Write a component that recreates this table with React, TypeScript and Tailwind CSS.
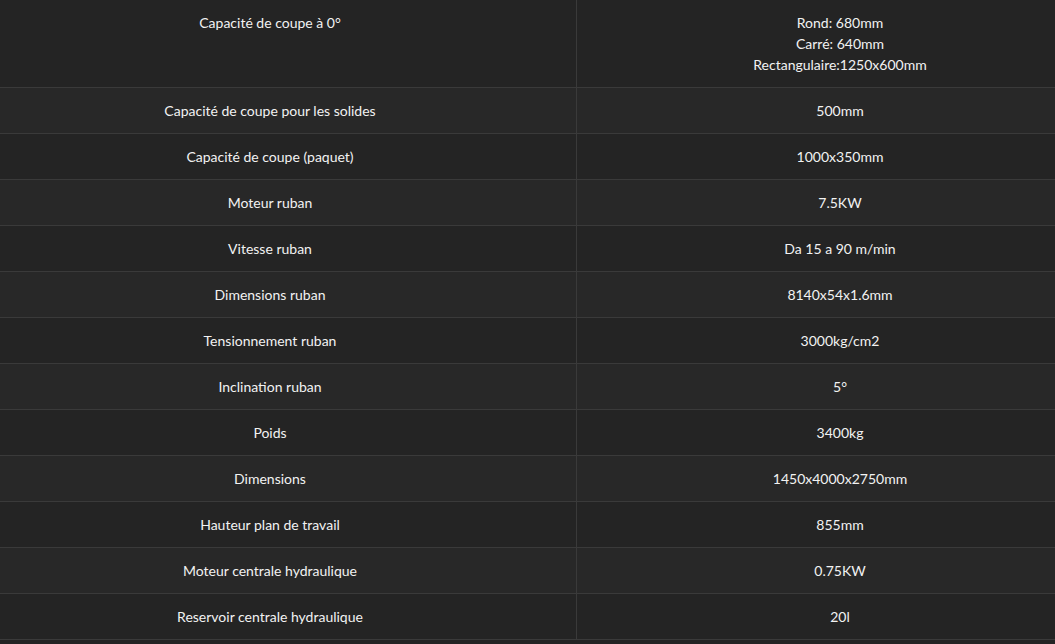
import React from "react";

const rows: [string, string[]][] = [
  ["Capacité de coupe à 0°", ["Rond: 680mm", "Carré: 640mm", "Rectangulaire:1250x600mm"]],
  ["Capacité de coupe pour les solides", ["500mm"]],
  ["Capacité de coupe (paquet)", ["1000x350mm"]],
  ["Moteur ruban", ["7.5KW"]],
  ["Vitesse ruban", ["Da 15 a 90 m/min"]],
  ["Dimensions ruban", ["8140x54x1.6mm"]],
  ["Tensionnement ruban", ["3000kg/cm2"]],
  ["Inclination ruban", ["5°"]],
  ["Poids", ["3400kg"]],
  ["Dimensions", ["1450x4000x2750mm"]],
  ["Hauteur plan de travail", ["855mm"]],
  ["Moteur centrale hydraulique", ["0.75KW"]],
  ["Reservoir centrale hydraulique", ["20l"]],
];

export default function App() {
  return (
    <div className="w-[1055px] h-[644px] overflow-hidden bg-[#242424]">
      <div
        className="ml-[-36px] w-[1139px] text-[14px] leading-[21px] text-[#f2f2f2]"
        style={{ fontFamily: "Lato, 'Open Sans', sans-serif" }}
      >
        {rows.map(([k, v], i) => (
          <div
            key={i}
            className={`grid grid-cols-[613px_526px] border-b border-[#3a3a3a] ${
              i % 2 === 0 ? "bg-[#242424]" : "bg-[#282828]"
            }`}
          >
            <div className="pt-[12px] pb-[12px] text-center border-r border-[#3a3a3a]">{k}</div>
            <div className="pt-[12px] pb-[12px] text-center">
              {v.map((line, j) => (
                <div key={j}>{line}</div>
              ))}
            </div>
          </div>
        ))}
      </div>
    </div>
  );
}
